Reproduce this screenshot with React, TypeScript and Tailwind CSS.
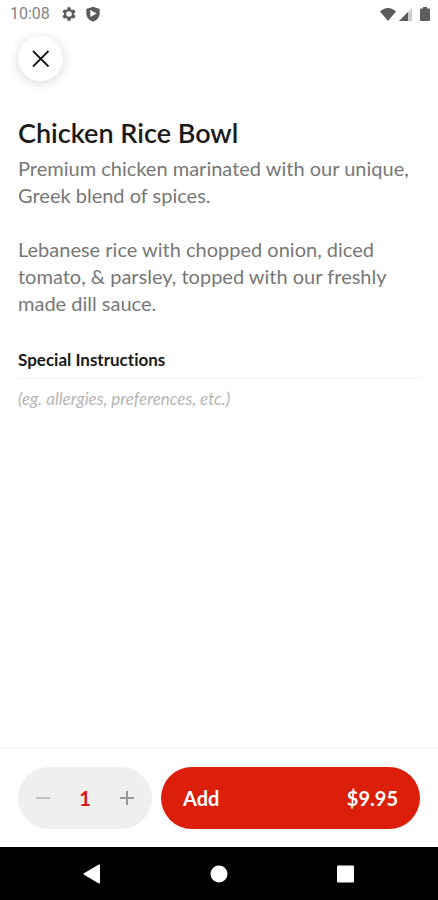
import React, { useState } from "react";

type MenuItem = {
  name: string;
  description: string[];
  price: number;
};

const ITEM: MenuItem = {
  name: "Chicken Rice Bowl",
  description: [
    "Premium chicken marinated with our unique, Greek blend of spices.",
    "Lebanese rice with chopped onion, diced tomato, & parsley, topped with our freshly made dill sauce.",
  ],
  price: 9.95,
};

function StatusBar() {
  return (
    <div className="flex h-7 items-center justify-between pl-[10px] pr-2 text-[#5c5c5c]">
      <div className="flex items-center">
        <span className="font-[Roboto,sans-serif] text-base text-[#858585]">10:08</span>
        <svg className="ml-[11px] size-4" viewBox="0 0 24 24" fill="currentColor" aria-hidden="true">
          <path d="M19.4 13c.04-.3.06-.65.06-1s-.02-.7-.07-1l2.1-1.6c.2-.15.25-.42.13-.64l-2-3.46a.5.5 0 0 0-.6-.22l-2.5 1a7.3 7.3 0 0 0-1.700-.98l-.37-2.650A.5.5 0 0 0 14 2h-4a.5.5 0 0 0-.5.43L9.150 5.100c-.6.24-1.170.57-1.700.97l-2.480-1a.5.5 0 0 0-.6.22l-2 3.460c-.12.22-.07.5.13.64L4.600 11a7.900 7.900 0 0 0 0 2l-2.100 1.600c-.2.15-.25.42-.13.64l2 3.460c.12.22.38.3.6.22l2.500-1c.52.4 1.080.73 1.680.98l.37 2.650c.04.25.25.43.5.43h4c.25 0 .46-.18.5-.43l.37-2.650c.6-.25 1.170-.58 1.700-.98l2.480 1c.22.08.48 0 .6-.22l2-3.460a.5.5 0 0 0-.13-.64L19.400 13zM12 16.200a4.200 4.200 0 1 1 0-8.400 4.200 4.200 0 0 1 0 8.400z" />
        </svg>
        <svg className="ml-2 size-4" viewBox="0 0 24 24" fill="currentColor" aria-hidden="true">
          <path
            fillRule="evenodd"
            d="M12 1 2 4.500V11c0 6 4 10.500 10 12.500 6-2 10-6.500 10-12.500V4.500L12 1zM8 6v10.500l9.500-5.250z"
          />
        </svg>
      </div>
      <div className="flex items-center">
        <svg className="h-[14px] w-4" viewBox="0 0 16 14" fill="currentColor" aria-hidden="true">
          <path d="M0 4.500C4.500-.2 11.500-.2 16 4.500L8 14z" />
        </svg>
        <svg className="ml-[3px] size-[13px]" viewBox="0 0 13 13" fill="currentColor" aria-hidden="true">
          <path d="M13 0v13H0z" opacity=".3" />
          <path d="M9 4v9H0z" />
        </svg>
        <svg className="ml-2 h-[14px] w-[10px]" viewBox="0 0 10 14" fill="currentColor" aria-hidden="true">
          <path d="M3 0h4v1.500h2a1 1 0 0 1 1 1V13a1 1 0 0 1-1 1H1a1 1 0 0 1-1-1V2.500a1 1 0 0 1 1-1h2z" />
        </svg>
      </div>
    </div>
  );
}

function SystemNav() {
  return (
    <nav className="flex h-[53px] items-center justify-around bg-black px-7 text-white">
      <button type="button" aria-label="Back">
        <svg className="size-5" viewBox="0 0 20 20" fill="currentColor">
          <path d="M18 1.200v17.600a.8.8 0 0 1-1.200.6L2 10.700a.8.8 0 0 1 0-1.400L16.800.6a.8.8 0 0 1 1.200.6z" />
        </svg>
      </button>
      <button type="button" aria-label="Home">
        <svg className="size-5" viewBox="0 0 20 20" fill="currentColor">
          <circle cx="10" cy="10" r="8.500" />
        </svg>
      </button>
      <button type="button" aria-label="Recent apps">
        <svg className="size-5" viewBox="0 0 20 20" fill="currentColor">
          <rect x="1" y="1.500" width="17" height="17" rx="1" />
        </svg>
      </button>
    </nav>
  );
}

export default function App() {
  const [quantity, setQuantity] = useState(1);

  return (
    <div className="flex min-h-screen flex-col bg-white font-[Lato,sans-serif] [font-variant-ligatures:none]">
      <StatusBar />

      <main className="flex-1 px-[18px] pt-2">
        <button
          type="button"
          aria-label="Close"
          className="flex size-[45px] items-center justify-center rounded-full bg-white text-[#1a1a1a] shadow-[0_2px_12px_rgba(0,0,0,0.16)]"
        >
          <svg className="size-[18px]" viewBox="0 0 18 18" fill="none" stroke="currentColor" strokeWidth="1.800">
            <path d="M1 1l15.500 15.500M16.500 1L1 16.500" />
          </svg>
        </button>

        <h1 className="mt-9 text-[27px] leading-8 font-semibold text-[#1a1a1a]">{ITEM.name}</h1>
        <div className="mt-[6px] space-y-[27px] text-[20px] leading-[27px] text-[#777777]">
          {ITEM.description.map((text) => (
            <p key={text}>{text}</p>
          ))}
        </div>

        {/* Special Instructions */}
        <label htmlFor="instructions" className="mt-8 block text-[17px] leading-[22px] font-bold text-[#1a1a1a]">
          Special Instructions
        </label>
        <input
          id="instructions"
          type="text"
          placeholder="(eg. allergies, preferences, etc.)"
          className="mt-[6px] block h-10 w-full border-t-2 border-[#f7f7f7] text-[17px] text-[#1a1a1a] outline-none placeholder:text-[#b5b5b5] placeholder:italic"
        />
      </main>

      {/* Add to cart */}
      <footer className="grid grid-cols-[134fr_259fr] gap-[9px] border-t-2 border-[#f6f6f6] px-[18px] py-[18px]">
        <div className="flex h-[62px] items-center justify-between rounded-full bg-[#efefef] px-[18px]">
          <button
            type="button"
            aria-label="Decrease quantity"
            onClick={() => setQuantity(Math.max(1, quantity - 1))}
            className="text-[#c2c2c2]"
          >
            <svg className="size-[14px]" viewBox="0 0 14 14" stroke="currentColor" strokeWidth="2">
              <path d="M0 7h14" />
            </svg>
          </button>
          <span className="text-xl font-bold text-[#d8150f]">{quantity}</span>
          <button
            type="button"
            aria-label="Increase quantity"
            onClick={() => setQuantity(quantity + 1)}
            className="text-[#999999]"
          >
            <svg className="size-[14px]" viewBox="0 0 14 14" stroke="currentColor" strokeWidth="2">
              <path d="M0 7h14M7 0v14" />
            </svg>
          </button>
        </div>
        <button
          type="button"
          className="flex h-[62px] items-center justify-between rounded-full bg-[#db1f0a] px-[22px] text-xl font-bold text-white"
        >
          <span>Add</span>
          <span>${(ITEM.price * quantity).toFixed(2)}</span>
        </button>
      </footer>

      <SystemNav />
    </div>
  );
}
